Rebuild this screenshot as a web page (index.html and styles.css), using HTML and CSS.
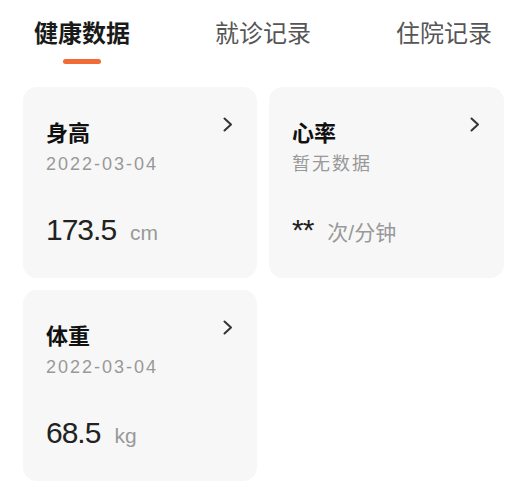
FILE: index.html
```html
<!DOCTYPE html>
<html lang="zh-CN">
<head>
    <meta charset="UTF-8">
    <title>健康数据</title>
    <link rel="stylesheet" href="styles.css">
</head>
<body>

    <div class="tabs">
        <div class="tab active">健康数据</div>
        <div class="tab">就诊记录</div>
        <div class="tab">住院记录</div>
    </div>

    <div class="cards">
        <div class="card">
            <div class="card-title">身高</div>
            <div class="card-date">2022-03-04</div>
            <div class="card-value"><span class="num">173.5</span><span class="unit">cm</span></div>
            <svg class="arrow" viewBox="0 0 10 15"><polyline points="1.5,1.5 8,7.5 1.5,13.5"/></svg>
        </div>
        <div class="card">
            <div class="card-title">心率</div>
            <div class="card-date">暂无数据</div>
            <div class="card-value"><span class="num">**</span><span class="unit">次/分钟</span></div>
            <svg class="arrow" viewBox="0 0 10 15"><polyline points="1.5,1.5 8,7.5 1.5,13.5"/></svg>
        </div>
        <div class="card">
            <div class="card-title">体重</div>
            <div class="card-date">2022-03-04</div>
            <div class="card-value"><span class="num">68.5</span><span class="unit">kg</span></div>
            <svg class="arrow" viewBox="0 0 10 15"><polyline points="1.5,1.5 8,7.5 1.5,13.5"/></svg>
        </div>
    </div>

</body>
</html>
```

FILE: styles.css
```css
body {
    margin: 0;
    background: #fff;
    font-family: "Liberation Sans", "Noto Sans CJK SC", sans-serif;
}
.tabs {
    display: flex;
    align-items: flex-start;
    gap: 85px;
    padding: 20px 0 0 34px;
}
.tab {
    display: flex;
    flex-direction: column;
    align-items: center;
    font-family: "Noto Sans CJK SC", sans-serif;
    font-size: 24px;
    line-height: 24px;
    color: #555;
}
.tab.active {
    color: #1a1a1a;
    font-weight: 600;
}
.tab.active::after {
    content: "";
    width: 38px;
    height: 5px;
    margin-top: 15px;
    border-radius: 3px;
    background: #f26a36;
}
.cards {
    display: grid;
    grid-template-columns: 234px 235px;
    gap: 12px;
    padding: 23px 0 0 23px;
}
.card {
    position: relative;
    box-sizing: border-box;
    height: 191px;
    padding: 33px 23px 0;
    border-radius: 14px;
    background: #f7f7f7;
}
.card-title {
    font-family: "Noto Sans CJK SC", sans-serif;
    font-size: 22px;
    line-height: 22px;
    font-weight: 600;
    color: #111;
}
.card-date {
    margin-top: 13px;
    font-size: 18px;
    line-height: 18px;
    letter-spacing: 2px;
    color: #999;
}
.card-value {
    display: flex;
    align-items: baseline;
    margin-top: 42px;
}
.num {
    font-size: 30px;
    line-height: 30px;
    letter-spacing: -1px;
    color: #222;
}
.unit {
    margin-left: 14px;
    font-size: 21px;
    color: #999;
}
.arrow {
    position: absolute;
    top: 30px;
    right: 24px;
    width: 10px;
    height: 15px;
    fill: none;
    stroke: #333;
    stroke-width: 2;
    stroke-linecap: round;
    stroke-linejoin: round;
}
```
